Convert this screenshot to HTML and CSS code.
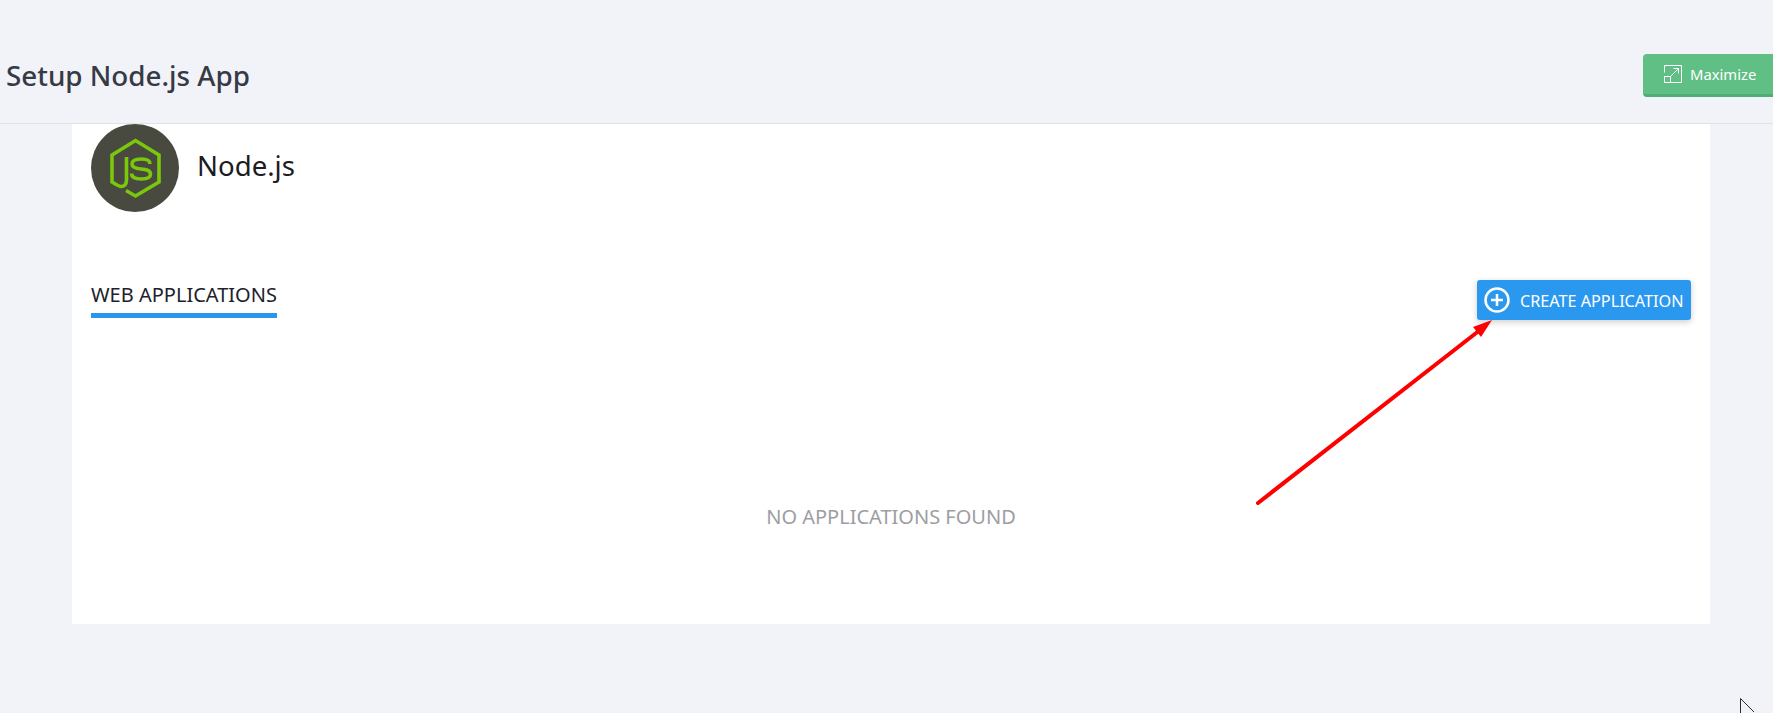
FILE: index.html
```html
<!DOCTYPE html>
<html lang="en">
<head>
    <meta charset="UTF-8">
    <title>Setup Node.js App</title>
    <link rel="stylesheet" href="styles.css">
</head>
<body>
    <header class="page-header">
        <h1 class="page-title">Setup Node.js App</h1>
        <button class="maximize-btn">
            <svg class="maximize-icon" viewBox="0 0 18 18" width="18" height="18" fill="none" stroke="#fff" stroke-width="1">
                <path d="M0.5 7.5V0.5H17.5V17.5H7"/>
                <rect x="0.5" y="11.5" width="6" height="6"/>
                <path d="M7 11L14.500 3.500M9.500 3.500H14.500V8.500"/>
            </svg>
            Maximize
        </button>
    </header>

    <main class="card">
        <div class="app-title">
            <div class="app-logo">
                <svg viewBox="0 0 88 88" width="88" height="88" fill="none" stroke="#7ac70c" stroke-width="3.600">
                    <path d="M35.500 33V56C35.500 60.500 33 62.500 30 62.500C28 62.500 26.500 61.500 21 58V31L44.500 16.500L68 31V58L44.500 72L35 66.500"/>
                    <path d="M59 40C59 36.500 55.500 35 50.500 35C45 35 41 36.500 41 40C41 43.500 45 44.500 50 45C55 45.500 59.500 46 59.500 50C59.500 53.500 55.500 55 50.500 55C45 55 40.500 53.500 40.500 49.500"/>
                </svg>
            </div>
            <span class="app-name">Node.js</span>
        </div>

        <div class="toolbar">
            <div class="tab">WEB APPLICATIONS</div>
            <button class="create-btn">
                <svg viewBox="0 0 26 26" width="26" height="26" fill="none" stroke="#fff" stroke-width="2.500">
                    <circle cx="13" cy="13" r="11.500"/>
                    <path d="M13 7V19M7 13H19"/>
                </svg>
                <span>CREATE APPLICATION</span>
            </button>
        </div>

        <p class="empty-text">NO APPLICATIONS FOUND</p>
    </main>

    <!-- annotation drawn over the screenshot -->
    <svg class="arrow" viewBox="0 0 1773 713" width="1773" height="713">
        <line x1="1258" y1="503" x2="1480" y2="330" stroke="#f00" stroke-width="4" stroke-linecap="round"/>
        <polygon points="1492,320 1481,337 1473,327" fill="#f00"/>
    </svg>

    <svg class="cursor" viewBox="0 0 14 15" width="14" height="15" fill="#fff" stroke="#2a2a3a" stroke-width="1">
        <path d="M0.500 0.500V16M0.500 0.500L14 14"/>
    </svg>
</body>
</html>
```

FILE: styles.css
```css
* {
    margin: 0;
    padding: 0;
    box-sizing: border-box;
}
html, body {
    height: 713px;
    overflow: hidden;
}
body {
    position: relative;
    background: #f1f3f8;
    font-family: "Noto Sans", "Open Sans", sans-serif;
}
button {
    border: none;
    color: #fff;
    font-family: inherit;
    cursor: pointer;
}
.page-header {
    display: flex;
    align-items: flex-start;
    justify-content: space-between;
    height: 124px;
    padding: 54px 0 0 6px;
    border-bottom: 1px solid #e0e1e5;
}
.page-title {
    font-size: 27.800px;
    line-height: 43px;
    font-weight: 500;
    color: #363a45;
}
.maximize-btn {
    display: flex;
    align-items: center;
    gap: 8px;
    width: 130px;
    height: 43px;
    padding-left: 21px;
    background: #60bf84;
    border-bottom: 3px solid #4faf73;
    border-radius: 4px 0 0 4px;
    font-size: 14.800px;
}
.card {
    display: flex;
    flex-direction: column;
    height: 500px;
    margin: 0 63px 0 72px;
    padding: 0 19px;
    background: #fff;
}
.app-title {
    display: flex;
    align-items: center;
    gap: 18px;
}
.app-logo {
    width: 88px;
    height: 88px;
    border-radius: 50%;
    background: #494a3f;
}
.app-logo svg {
    display: block;
}
.app-name {
    position: relative;
    top: -3px;
    font-size: 27.600px;
    color: #1c1c22;
}
.toolbar {
    display: flex;
    align-items: flex-start;
    justify-content: space-between;
    margin-top: 68px;
}
.tab {
    height: 38px;
    padding-top: 1px;
    border-bottom: 5px solid #2b96ee;
    font-size: 20px;
    line-height: 27px;
    color: #21212a;
}
.create-btn {
    display: flex;
    align-items: center;
    gap: 10px;
    width: 214px;
    height: 40px;
    padding-left: 7px;
    background: #2b98f0;
    border-radius: 3px;
    box-shadow: 0 2px 6px rgba(0, 0, 0, 0.2);
    font-size: 16.200px;
    white-space: nowrap;
}
.create-btn span {
    padding-top: 1px;
}
.empty-text {
    margin-top: 183px;
    text-align: center;
    font-size: 20px;
    line-height: 27px;
    color: #9c9ea3;
}
.arrow {
    position: absolute;
    top: 0;
    left: 0;
    pointer-events: none;
}
.cursor {
    position: absolute;
    top: 698px;
    left: 1740px;
}
```
